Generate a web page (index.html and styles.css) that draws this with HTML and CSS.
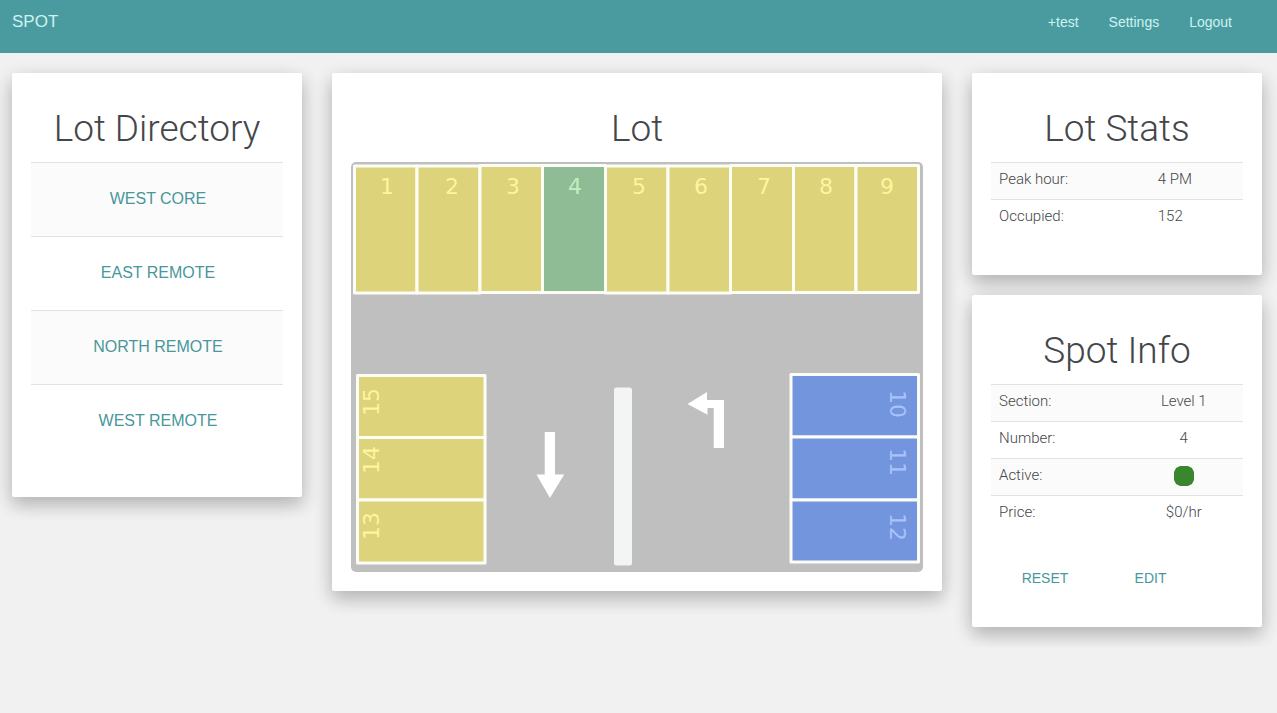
FILE: index.html
```html
<!DOCTYPE html>
<html lang="en">
<head>
<meta charset="utf-8">
<meta name="viewport" content="width=device-width, initial-scale=1">
<title>SPOT</title>
<link rel="stylesheet" href="styles.css">
</head>
<body>
<header class="navbar">
  <a class="brand" href="#">SPOT</a>
  <nav class="nav-links">
    <a href="#">+test</a>
    <a href="#">Settings</a>
    <a href="#">Logout</a>
  </nav>
</header>
<main class="dashboard">
  <section class="card directory">
    <h1 class="card-title">Lot Directory</h1>
    <ul class="lot-list">
      <li><button type="button">WEST CORE</button></li>
      <li><button type="button">EAST REMOTE</button></li>
      <li><button type="button">NORTH REMOTE</button></li>
      <li><button type="button">WEST REMOTE</button></li>
    </ul>
  </section>

  <section class="card lot">
    <h1 class="card-title">Lot</h1>
    <svg class="lot-map" viewBox="0 0 572 410" role="img" aria-label="Parking lot map">
      <rect class="asphalt" width="572" height="410" rx="5"/>
      <g class="spot open">
        <rect x="3.5" y="4" width="62.5" height="127"/><text x="36" y="32">1</text>
        <rect x="66" y="4" width="63" height="127"/><text x="101" y="32">2</text>
        <rect x="129" y="3.5" width="62.5" height="127"/><text x="162" y="32">3</text>
        <rect x="254.5" y="4" width="62.5" height="127"/><text x="288" y="32">5</text>
        <rect x="317" y="4" width="62.5" height="127"/><text x="350" y="32">6</text>
        <rect x="379.5" y="3.5" width="63" height="127"/><text x="413" y="32">7</text>
        <rect x="442.5" y="3.5" width="62.5" height="127"/><text x="475" y="32">8</text>
        <rect x="505" y="3.5" width="62.5" height="127"/><text x="536" y="32">9</text>
      </g>
      <g class="spot selected">
        <rect x="191.5" y="3.5" width="63" height="127"/><text x="224" y="32">4</text>
      </g>
      <g class="spot open">
        <rect x="6.5" y="213.5" width="127.5" height="62"/><text transform="translate(28 240) rotate(-90)">15</text>
        <rect x="6.5" y="275.5" width="127.5" height="62.5"/><text transform="translate(28 298) rotate(-90)">14</text>
        <rect x="6.5" y="338" width="127.5" height="63"/><text transform="translate(28 364) rotate(-90)">13</text>
      </g>
      <g class="spot reserved">
        <rect x="440" y="212.5" width="127.5" height="62.5"/><text transform="translate(539 242) rotate(90)">10</text>
        <rect x="440" y="275" width="127.5" height="63"/><text transform="translate(539 300) rotate(90)">11</text>
        <rect x="440" y="338" width="127.5" height="62"/><text transform="translate(539 365) rotate(90)">12</text>
      </g>
      <rect class="island" x="263" y="225.5" width="18" height="178" rx="2.5"/>
      <path class="arrow" d="M193.700 270h10.300v42.500h9.200L198.900 336 185.500 312.500h8.200z"/>
      <path class="arrow" d="M336.500 242 356 230v8h17v48h-10.300v-40H356.500v6.700z"/>
    </svg>
  </section>

  <div class="side">
    <section class="card">
      <h1 class="card-title">Lot Stats</h1>
      <table class="details stats">
        <tbody>
          <tr><th scope="row">Peak hour:</th><td>4 PM</td></tr>
          <tr><th scope="row">Occupied:</th><td>152</td></tr>
        </tbody>
      </table>
    </section>
    <section class="card">
      <h1 class="card-title">Spot Info</h1>
      <table class="details info">
        <tbody>
          <tr><th scope="row">Section:</th><td>Level 1</td></tr>
          <tr><th scope="row">Number:</th><td>4</td></tr>
          <tr><th scope="row">Active:</th><td><svg class="status" viewBox="0 0 20 20" role="img" aria-label="Active"><path d="M6 0h8l4 2 2 4v8l-2 4-4 2H6l-4-2-2-4V6l2-4z"/></svg></td></tr>
          <tr><th scope="row">Price:</th><td>$0/hr</td></tr>
        </tbody>
      </table>
      <div class="actions">
        <button type="button">RESET</button>
        <button type="button">EDIT</button>
      </div>
    </section>
  </div>
</main>
</body>
</html>
```
FILE: styles.css
```css
* {
  box-sizing: border-box;
}

body {
  margin: 0;
  background: #f1f1f1;
  color: #444649;
  font-family: "Liberation Sans", Arial, sans-serif;
  font-size: 14px;
  line-height: 20px;
}

a {
  color: inherit;
  text-decoration: none;
}

button {
  border: 0;
  background: none;
  color: #48979b;
  font: inherit;
  cursor: pointer;
}

.navbar {
  display: flex;
  justify-content: space-between;
  padding: 12px 45px 21px 12px;
  background: #4a9b9f;
  color: #cdf3f1;
}

.brand {
  font-size: 17px;
}

.nav-links {
  display: flex;
  gap: 30px;
}

.dashboard {
  display: grid;
  grid-template-columns: repeat(12, 1fr);
  align-items: start;
  gap: 30px;
  padding: 20px 15px 20px 12px;
}

.directory,
.side {
  grid-column: span 3;
}

.lot {
  grid-column: span 6;
}

.side {
  display: grid;
  gap: 20px;
}

.card {
  padding: 36px 19px 39px;
  border-radius: 2px;
  background: #fff;
  box-shadow: 0 8px 17px rgba(0, 0, 0, 0.15), 0 6px 20px rgba(0, 0, 0, 0.14);
}

.card.lot {
  padding-bottom: 19px;
}

.card-title {
  margin: 0 0 13px;
  font-family: Roboto, "Liberation Sans", sans-serif;
  font-size: 37px;
  font-weight: 300;
  line-height: 40px;
  text-align: center;
}

.lot-list {
  margin: 0;
  padding: 0;
  list-style: none;
}

.lot-list li {
  border-top: 1px solid #e2e2e2;
}

.lot-list li:nth-child(odd),
.details tr:nth-child(odd) {
  background: #fbfbfb;
}

.lot-list button {
  width: 100%;
  padding: 26px 8px 27px 10px;
  font-size: 16px;
}

.lot-map {
  display: block;
  width: 100%;
}

.asphalt {
  fill: #bfbfbf;
}

.spot rect {
  stroke: #fdfdf8;
  stroke-width: 3;
  stroke-linejoin: round;
}

.spot text {
  font-family: "DejaVu Sans", sans-serif;
  font-size: 22px;
  text-anchor: middle;
}

.open rect {
  fill: #dcd37a;
}

.open text {
  fill: #fdf5a0;
}

.selected rect {
  fill: #8fbc94;
}

.selected text {
  fill: #c1efc2;
}

.reserved rect {
  fill: #7395dd;
}

.reserved text {
  fill: #a8c2fb;
}

.island {
  fill: #f3f4f4;
}

.arrow {
  fill: #fff;
}

.details {
  width: 100%;
  border-collapse: collapse;
  table-layout: fixed;
  font-family: Roboto, "Liberation Sans", sans-serif;
  font-size: 15px;
  font-weight: 300;
}

.details th,
.details td {
  padding: 6px 8px 10px;
  border-top: 1px solid #e2e2e2;
  font-weight: 300;
  text-align: left;
}

.stats th {
  width: 63%;
}

.info th {
  width: 53%;
}

.info td {
  text-align: center;
}

.status {
  display: block;
  width: 20px;
  height: 20px;
  margin: 1px auto -1px;
  fill: #3a862f;
}

.actions {
  display: grid;
  grid-template-columns: 108px 103px;
  padding-top: 36px;
}

.actions button {
  padding: 0;
}
```
